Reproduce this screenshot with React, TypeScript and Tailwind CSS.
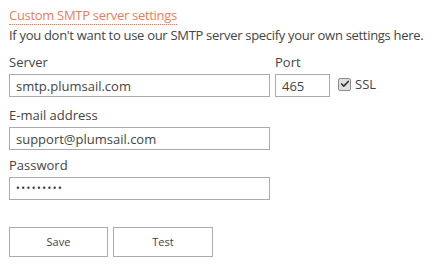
import { Check } from 'lucide-react';

const font = { fontFamily: '"Open Sans", "Noto Sans", "Liberation Sans", sans-serif' };

function Field({ label, children }: { label: string; children: React.ReactNode }) {
  return (
    <div className="flex flex-col gap-[2px]">
      <label className="text-[13px] leading-[20px] text-[#444]">{label}</label>
      {children}
    </div>
  );
}

const inputCls =
  'h-[23px] border border-[#ababab] bg-white px-[6px] text-[13px] text-[#444] outline-none';

export default function App() {
  return (
    <div className="min-h-[272px] w-[434px] bg-white pl-[9px] pt-[2px] text-[#444]" style={font}>
      {/* Header */}
      <div className="inline-block border-b border-dotted border-[#e5805f] text-[13px] leading-[18px] tracking-[-0.3px] text-[#e5805f]">
        Custom SMTP server settings
      </div>
      <p className="text-[13px] leading-[18px] tracking-[-0.3px] whitespace-nowrap">
        If you don't want to use our SMTP server specify your own settings here.
      </p>

      <div className="mt-[8px] flex items-end gap-[5px]">
        <Field label="Server">
          <input readOnly defaultValue="smtp.plumsail.com" className={`${inputCls} w-[261px]`} />
        </Field>
        <Field label="Port">
          <input readOnly defaultValue="465" className={`${inputCls} w-[55px]`} />
        </Field>
        <div className="mb-[5px] ml-[3px] flex items-center gap-[4px]">
          <span className="flex h-[13px] w-[13px] items-center justify-center rounded-[2px] border border-[#8f8f8f] bg-[#dedede]">
            <Check className="h-[10px] w-[10px] text-[#333]" strokeWidth={4} />
          </span>
          <span className="text-[13px] leading-[16px]">SSL</span>
        </div>
      </div>

      <div className="mt-[8px]">
        <Field label="E-mail address">
          <input readOnly defaultValue="support@plumsail.com" className={`${inputCls} w-[261px]`} />
        </Field>
      </div>

      <div className="mt-[5px]">
        <Field label="Password">
          <div className={`${inputCls} flex w-[261px] items-center`}>
            <span className="text-[10px] tracking-[1.5px] text-[#333]">•••••••••</span>
          </div>
        </Field>
      </div>

      <div className="mt-[27px] flex gap-[5px]">
        <button className="h-[30px] w-[99px] border border-[#ababab] bg-white text-[11px] text-[#444]">
          Save
        </button>
        <button className="h-[30px] w-[100px] border border-[#ababab] bg-white text-[11px] text-[#444]">
          Test
        </button>
      </div>
    </div>
  );
}
